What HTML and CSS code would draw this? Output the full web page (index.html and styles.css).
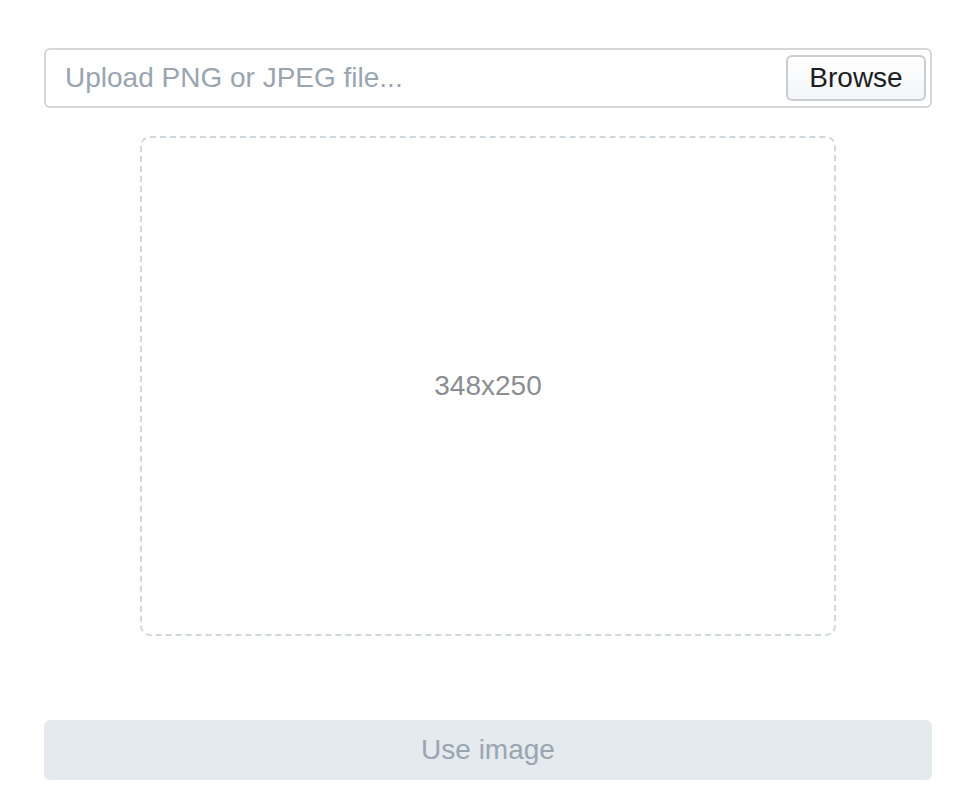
FILE: index.html
```html
<!DOCTYPE html>
<html>
<head>
    <title>Upload image</title>
    <link rel="stylesheet" href="styles.css">
</head>
<body>
    <div class="uploader">
        <div class="file-input">
            <span class="file-placeholder">Upload PNG or JPEG file...</span>
            <button class="browse-btn" type="button">Browse</button>
        </div>

        <div class="preview">
            <span class="preview-size">348x250</span>
        </div>

        <button class="use-btn" type="button" disabled>Use image</button>
    </div>
</body>
</html>
```

FILE: styles.css
```css
body { margin: 0; background: #fff; font-family: "Liberation Sans", Arial, sans-serif; }
.uploader { width: 888px; padding: 48px 0 0 44px; display: flex; flex-direction: column; align-items: center; }
.file-input { box-sizing: border-box; width: 100%; height: 60px; display: flex; align-items: center; justify-content: space-between; border: 2px solid #d4d6d8; border-radius: 6px; padding: 0 4px 0 19px; }
.file-placeholder { font-size: 28px; color: #9aa5b0; }
.browse-btn { box-sizing: border-box; width: 140px; height: 46px; font-family: inherit; font-size: 28px; color: #1b1f23; background: linear-gradient(#fff, #f3f5f7); border: 2px solid #c9ccd0; border-radius: 6px; padding: 0; }
.preview { box-sizing: border-box; width: 696px; height: 500px; margin-top: 28px; border: 2px dashed #d0d8de; border-radius: 10px; display: flex; align-items: center; justify-content: center; }
.preview-size { font-size: 28px; color: #8a8d91; }
.use-btn { width: 100%; height: 60px; margin-top: 84px; font-family: inherit; font-size: 28px; color: #9aa5b0; background: #e5eaee; border: none; border-radius: 6px; }
```
